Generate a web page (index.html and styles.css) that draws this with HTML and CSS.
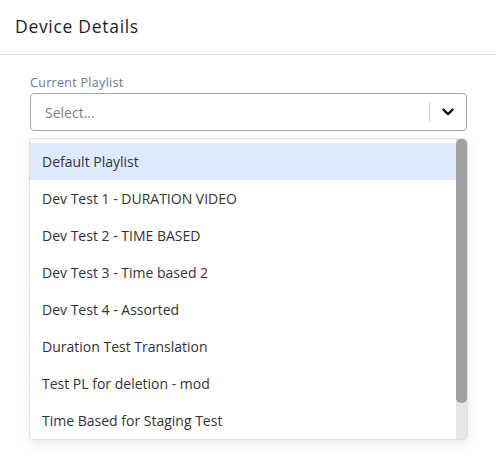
FILE: index.html
```html
<!DOCTYPE html>
<html>
<head>
<meta charset="utf-8">
<link rel="stylesheet" href="styles.css">
</head>
<body>
<div class="header">Device Details</div>
<div class="content">
  <label class="label">Current Playlist</label>
  <div class="select">
    <span class="placeholder">Select...</span>
    <span class="sep"></span>
    <span class="chev"><svg width="14" height="14" viewBox="0 0 20 20"><path d="M3.5 6.5 L10 13 L16.5 6.5" fill="none" stroke="#111" stroke-width="3.4" stroke-linecap="round" stroke-linejoin="round"/></svg></span>
  </div>
  <div class="menu">
    <div class="list">
      <div class="item active">Default Playlist</div>
      <div class="item">Dev Test 1 - DURATION VIDEO</div>
      <div class="item">Dev Test 2 - TIME BASED</div>
      <div class="item">Dev Test 3 - Time based 2</div>
      <div class="item">Dev Test 4 - Assorted</div>
      <div class="item">Duration Test Translation</div>
      <div class="item">Test PL for deletion - mod</div>
      <div class="item">Time Based for Staging Test</div>
    </div>
    <div class="scrollbar"><div class="thumb"></div></div>
  </div>
</div>
</body>
</html>
```
FILE: styles.css
```css
* { box-sizing: border-box; }
html, body { margin: 0; padding: 0; background: #fff; }
body { font-family: "Open Sans", "Liberation Sans", sans-serif; color: #222; width: 496px; height: 466px; overflow: hidden; }
.header { font-size: 17.5px; font-weight: 500; letter-spacing: 0.7px; padding: 14px 15px 0; height: 55px; border-bottom: 1px solid #dcdcdc; color: #1e1e1e; }
.content { padding: 20px 29px 0 30px; }
.label { display: block; font-size: 12.5px; letter-spacing: 0.3px; color: #6b7a90; line-height: 16px; margin-bottom: 2px; }
.select { height: 38px; border: 1px solid #a8a8a8; border-radius: 4px; display: flex; align-items: center; padding-left: 14px; }
.placeholder { flex: 1; color: #808080; font-size: 14px; }
.sep { width: 1px; height: 20px; background: #c8c8c8; }
.chev { width: 36px; display: flex; justify-content: center; align-items: center; }
.menu { margin-top: 7px; margin-left: -1px; margin-right: -1px; border: 1px solid #e0e0e0; border-radius: 4px; box-shadow: 0 4px 10px rgba(0,0,0,0.08); height: 302px; overflow: hidden; display: flex; }
.list { flex: 1; padding: 4px 0; overflow: hidden; }
.scrollbar { width: 11px; background: #e6e6e6; display: flex; flex-direction: column; }
.thumb { height: 264px; background: #a0a0a0; border-radius: 5px; }
.item { height: 37px; line-height: 37px; padding-left: 12px; font-size: 14px; color: #333; white-space: nowrap; }
.item.active { background: #deebff; }
```
